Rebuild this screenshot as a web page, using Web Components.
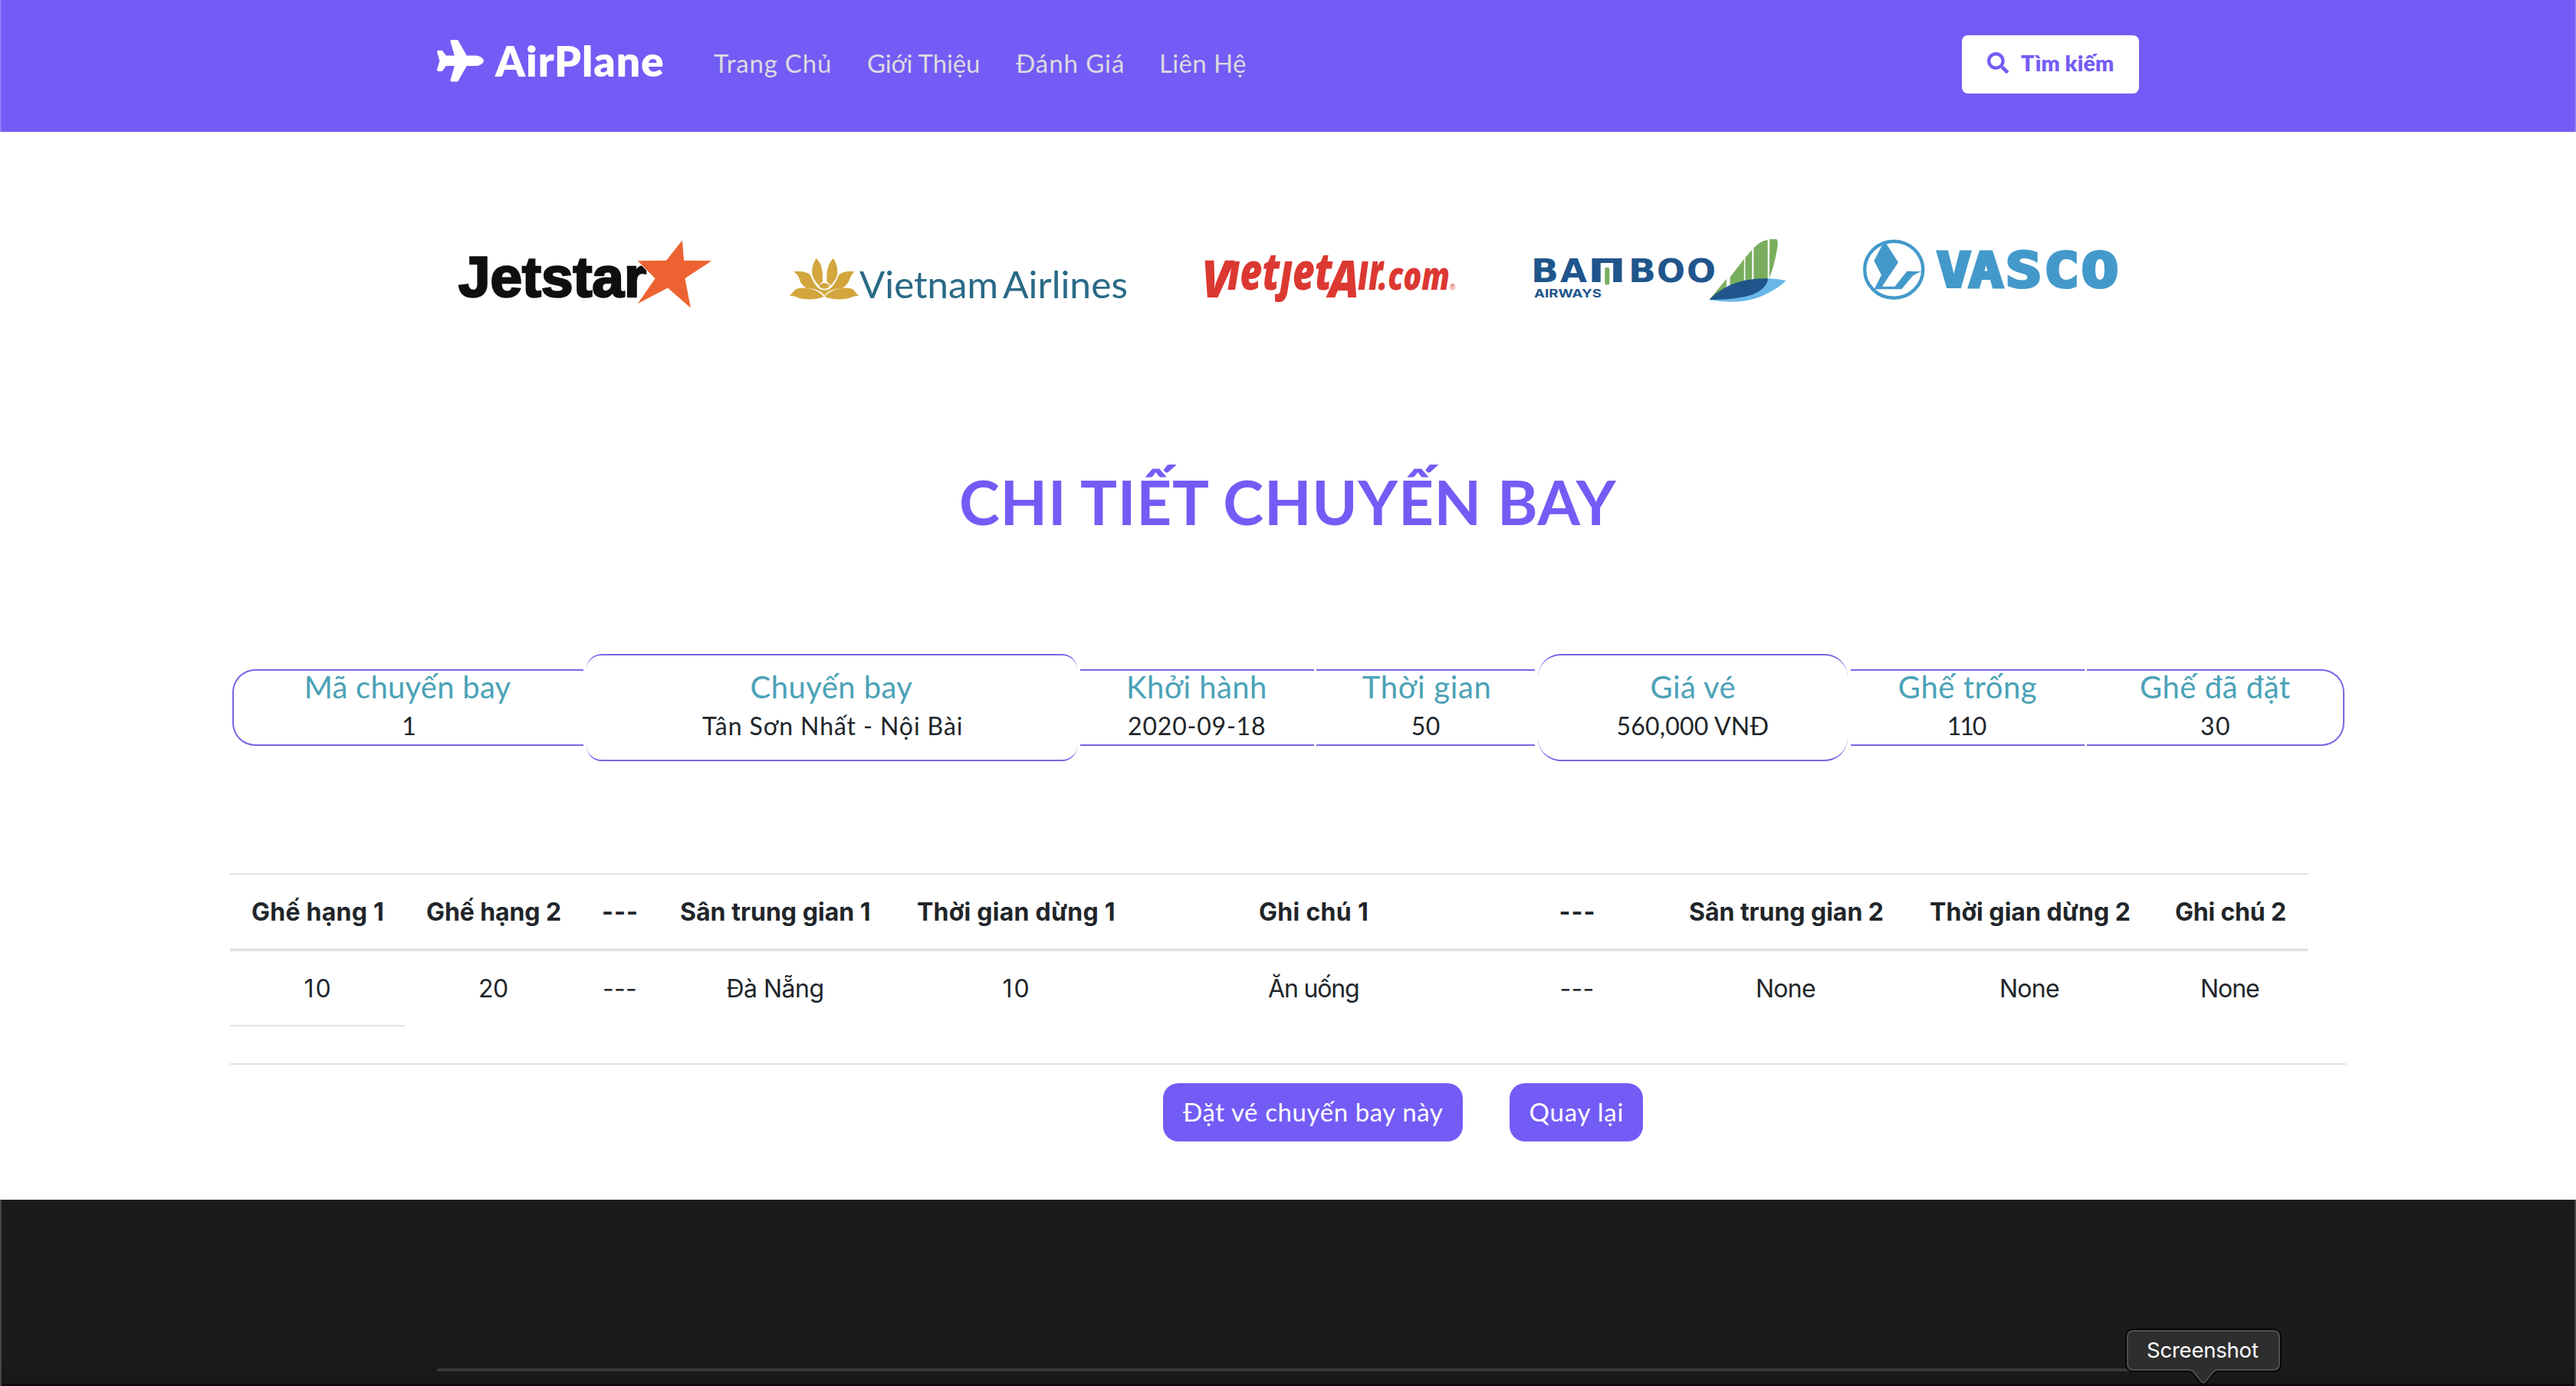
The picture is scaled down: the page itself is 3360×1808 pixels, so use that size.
<!DOCTYPE html>
<html lang="vi">
<head>
<meta charset="utf-8">
<title>AirPlane</title>
<style>
html,body{margin:0;padding:0;background:#fff}
body{width:3360px;height:1808px;overflow:hidden;font-family:Lato,"Open Sans",sans-serif;color:#212529}
</style>
</head>
<body>
<flight-page></flight-page>
<script>
/* Text run tracked out to an exact ink width. */
const pen = document.createElement('canvas').getContext('2d');
customElements.define('fit-text', class extends HTMLElement {
  connectedCallback() {
    if (this.shadowRoot) return;
    const root = this.attachShadow({mode: 'open'});
    root.innerHTML = '<style>:host{display:block;white-space:nowrap;flex:none}span{display:inline-block;vertical-align:top;letter-spacing:.01px}</style><span><slot></slot></span>';
    const w = +this.getAttribute('w');
    const cs = getComputedStyle(this);
    const text = this.textContent;
    pen.font = `${cs.fontWeight} ${cs.fontSize} ${cs.fontFamily}`;
    const m = pen.measureText(text);
    const span = root.querySelector('span');
    const ink = m.actualBoundingBoxLeft + m.actualBoundingBoxRight + span.getBoundingClientRect().width - m.width;
    const n = [...text].length;
    this.style.width = w + 'px';
    if (n > 1) span.style.letterSpacing = (w - ink) / (n - 1) + 'px';
    span.style.marginLeft = m.actualBoundingBoxLeft + 'px';
  }
});

customElements.define('site-header', class extends HTMLElement {
  connectedCallback() {
    this.attachShadow({mode: 'open'}).innerHTML = `
<style>
:host{display:flex;box-sizing:border-box;height:172px;padding:0 570px;background:#735cf5;align-items:flex-start;box-shadow:inset 2px 0 #8a78f6,inset -2px 0 #8a78f6}
.plane{display:block;width:61px;height:54.5px;margin-top:52px;flex:none}
.brand{margin-left:14px;font-size:55px;font-weight:800;color:#fff;line-height:158px}
nav{display:flex;margin-left:66px;gap:49px;font-size:33px;line-height:165px;color:#dcdadf}
nav :nth-child(3){margin-left:-1px}nav :nth-child(4){margin-left:1px}
button{all:unset;box-sizing:border-box;margin:46px 0 0 auto;width:231px;height:76px;border-radius:8px;background:#fff;color:#735cf5;display:flex;padding-left:33px;font-size:28.5px;font-weight:800;line-height:73px}
button svg{width:28px;height:28px;margin:22px 16px 0 0}
</style>
<svg class="plane" viewBox="0 0 576 512" fill="#fff" preserveAspectRatio="none"><path d="M480 192H365.71L260.61 8.06A16.014 16.014 0 0 0 246.71 0h-65.5c-10.63 0-18.3 10.17-15.38 20.39L214.86 192H112l-43.2-57.6c-3.02-4.03-7.77-6.4-12.8-6.4H16.01C5.6 128-2.04 137.78.49 147.88L32 256 .49 364.12C-2.04 374.22 5.6 384 16.01 384H56c5.04 0 9.78-2.37 12.8-6.4L112 320h102.86l-49.03 171.6c-2.92 10.22 4.75 20.4 15.38 20.4h65.5c5.74 0 11.04-3.08 13.89-8.06L365.71 320H480c35.35 0 96-28.65 96-64s-60.65-64-96-64z"/></svg>
<fit-text class="brand" w="220">AirPlane</fit-text>
<nav><fit-text w="152">Trang Chủ</fit-text><fit-text w="145">Giới Thiệu</fit-text><fit-text w="140">Đánh Giá</fit-text><fit-text w="110">Liên Hệ</fit-text></nav>
<button><svg viewBox="0 0 512 512" fill="currentColor"><path d="M505 442.7L405.3 343c-4.5-4.5-10.6-7-17-7H372c27.6-35.3 44-79.7 44-128C416 93.1 322.9 0 208 0S0 93.1 0 208s93.1 208 208 208c48.3 0 92.7-16.4 128-44v16.3c0 6.4 2.5 12.5 7 17l99.7 99.7c9.4 9.4 24.6 9.4 33.9 0l28.3-28.3c9.4-9.4 9.4-24.6.1-34zM208 336c-70.7 0-128-57.2-128-128 0-70.7 57.2-128 128-128 70.7 0 128 57.2 128 128 0 70.7-57.2 128-128 128z"/></svg><fit-text w="120">Tìm kiếm</fit-text></button>`;
  }
});

const T = (x, y, w, size, txt, extra = '') => `<text x="${x}" y="${y}" textLength="${w}" lengthAdjust="spacingAndGlyphs" font-size="${size}" ${extra}>${txt}</text>`;
const LOGOS = {
  jetstar: [600, 330, `
<g font-family="Liberation Sans" font-weight="700" fill="#100f0d" stroke="#100f0d" stroke-width="2.6">${T(598, 387, 245, 74, 'Jetstar')}</g>
<path fill="#ec6331" stroke="#fff" stroke-width="1" d="M890.4 312.3L892.5 339.3L929.7 339.8L894 363.3L901.5 402.7L871 376L830.5 397.3L854 363.3L831 339.8L869 339.3Z"/>`],
  vietnam: [1030, 440, `
<g transform="translate(580 290) scale(.5867 .3333)" fill="#d2a63c">
<path d="M826 141Q843 168 840 234Q832 239 834 250Q819 225 817 203Q815 170 826 141Z"/>
<path d="M864 141Q847 168 850 234Q858 239 856 250Q871 225 873 203Q875 170 864 141Z"/>
<path d="M775 193Q803 188 813 206Q821 246 836 265Q841 276 843 283Q829 258 805 259Q791 243 788 220Q785 203 775 193Z"/>
<path d="M911 193Q886 188 876 206Q868 246 853 265Q848 276 846 283Q860 258 884 259Q897 243 901 220Q904 203 911 193Z"/>
<path d="M767 287L781 261Q797 251 816 262Q832 270 843 290Q829 303 804 301Q789 300 781 291Q774 288 767 287Z"/>
<path d="M920 287L907 261Q891 251 872 262Q856 270 845 290Q859 303 884 301Q899 300 907 291Q914 288 920 287Z"/>
<ellipse cx="844" cy="249" rx="11" ry="11"/><path d="M835 260Q844 271 853 260Q851 274 845 287Q838 274 835 260Z"/></g>
<g font-family="Lato" fill="#2a6a87">${T(1121, 388.7, 181, 49, 'Vietnam')}${T(1308, 388.7, 163, 49, 'Airlines')}</g>`],
  vietjet: [1570, 330, `
<text font-family="Open Sans" font-weight="800" font-style="italic" fill="#dc3832" y="378" font-size="67"><tspan x="1567" y="388" textLength="39" lengthAdjust="spacingAndGlyphs">V</tspan><tspan x="1601" y="378" textLength="137" lengthAdjust="spacingAndGlyphs">ıetȷet</tspan><tspan x="1733" y="388" textLength="40" lengthAdjust="spacingAndGlyphs">A</tspan><tspan x="1771" y="378" textLength="33" lengthAdjust="spacingAndGlyphs">ır</tspan><tspan x="1798" y="378" font-size="52" textLength="93" lengthAdjust="spacingAndGlyphs">.com</tspan></text>
<text x="1891" y="378" font-family="Liberation Sans" font-size="10" fill="#dc3832">®</text>`],
  bamboo: [2000, 330, `
<g font-family="DejaVu Sans" font-weight="700" fill="#20558c">
<text y="368" font-size="42.5"><tspan x="1997" textLength="36" lengthAdjust="spacingAndGlyphs">B</tspan><tspan x="2035" textLength="35" lengthAdjust="spacingAndGlyphs">A</tspan><tspan x="2071" textLength="50" lengthAdjust="spacingAndGlyphs">Π</tspan><tspan x="2124" textLength="36" lengthAdjust="spacingAndGlyphs">B</tspan><tspan x="2161" textLength="37" lengthAdjust="spacingAndGlyphs">O</tspan><tspan x="2200" textLength="38" lengthAdjust="spacingAndGlyphs">O</tspan></text>
${T(2001, 387.5, 88, 15, 'AIRWAYS', 'font-family="Inter"')}</g>
<rect x="2093.3" y="349" width="6" height="22.6" rx="2" fill="#78ae5e"/>
<g transform="translate(1540 290) scale(.523 .3333)"><g fill="#78ae5e">
<path d="M1319 302L1361 222V252ZM1370 215L1405 144V234L1370 248ZM1408 138L1425 108V225L1408 232ZM1429 101Q1446 72 1464 69V222H1429ZM1469 66H1484Q1490 66 1489 90Q1483 150 1475 188L1468 219Z"/></g>
<path fill="#68b7e8" d="M1320 304Q1400 325 1455 285Q1493 256 1510 228Q1485 219 1463 220L1420 270Z"/>
<path fill="#20558c" d="M1318 303Q1372 216 1465 220Q1462 260 1426 283Q1386 304 1318 303Z"/></g>`],
  vasco: [2430, 330, `
<g fill="#4499cb"><ellipse cx="2470.2" cy="351.7" rx="38" ry="37" fill="none" stroke="#4499cb" stroke-width="4.4"/>
<path transform="translate(2400 290) scale(.3333)" d="M168 84L180 82L228 157L165 251H215L262 191L320 193Q293 200 277 218L241 262H134L162 206L133 150Z"/>
<text y="374" font-size="63" font-family="DejaVu Sans Mono" font-weight="700" stroke="#4499cb" stroke-width="4"><tspan x="2526" textLength="45" lengthAdjust="spacingAndGlyphs">V</tspan><tspan x="2568" textLength="45" lengthAdjust="spacingAndGlyphs">A</tspan><tspan x="2616" textLength="47" lengthAdjust="spacingAndGlyphs">S</tspan><tspan x="2666" textLength="46" lengthAdjust="spacingAndGlyphs">C</tspan><tspan x="2715" textLength="48" lengthAdjust="spacingAndGlyphs">O</tspan></text></g>`]
};
customElements.define('airline-logo', class extends HTMLElement {
  connectedCallback() {
    const [x, w, art] = LOGOS[this.getAttribute('name')];
    this.attachShadow({mode: 'open'}).innerHTML = `<style>:host{display:block;flex:none}svg{display:block;overflow:visible}</style>
<svg width="${w}" height="140" viewBox="${x} 290 ${w} 140">${art}</svg>`;
  }
});

customElements.define('info-cell', class extends HTMLElement {
  connectedCallback() {
    const g = k => this.getAttribute(k);
    const tall = this.hasAttribute('tall');
    this.attachShadow({mode: 'open'}).innerHTML = `<style>
:host{display:flex;flex-direction:column;align-items:center;box-sizing:border-box;flex:none;width:${g('width')}px;height:${tall ? 140 : 100}px;border:0 solid #7468e6;border-width:2px 0;border-radius:${g('radius') || 0};padding-top:${tall ? 20 : 0}px}
:host([first]){border-left-width:2px}:host([last]){border-right-width:2px}
.l{margin-top:-1px;font-size:40px;line-height:44px;color:#4ba2b7}.v{font-size:32px;line-height:57px}
</style><fit-text class="l" w="${g('lw')}">${g('label')}</fit-text><fit-text class="v" w="${g('vw')}">${g('value')}</fit-text>`;
  }
});

const COLS = [[228,'Ghế hạng 1',170,'10',33],[232,'Ghế hạng 2',174,'20',36],[97,'---',43,'---',41],[308,'Sân trung gian 1',246,'Đà Nẵng',125],[320,'Thời gian dừng 1',256,'10',33],[456,'Ghi chú 1',140,'Ăn uống',118],[232,'---',43,'---',41],[314,'Sân trung gian 2',252,'None',76],[322,'Thời gian dừng 2',260,'None',76],[201,'Ghi chú 2',143,'None',75]];
customElements.define('detail-table', class extends HTMLElement {
  connectedCallback() {
    const row = (i, c) => `<div class="row ${c}">${COLS.map(k => `<div class="cell" style="width:${k[0]}px"><fit-text w="${k[i + 1]}">${k[i]}</fit-text></div>`).join('')}</div>`;
    this.attachShadow({mode: 'open'}).innerHTML = `<style>
:host{display:block;width:2760px;border-bottom:2px solid #dee2e6;font:400 32px/98px Inter,sans-serif}
.row{display:flex;width:2710px;height:96px}.cell{display:flex;justify-content:center;flex:none}
.head{font-weight:700;border-top:2px solid #dee2e6;border-bottom:4px solid #dee2e6}
.tail{width:228px;height:48px;border-top:2px solid #dee2e6}
</style>${row(1, 'head')}${row(3, '')}<div class="tail"></div>`;
  }
});

customElements.define('action-button', class extends HTMLElement {
  connectedCallback() {
    this.attachShadow({mode: 'open'}).innerHTML = `<style>
:host{display:flex;justify-content:center;box-sizing:border-box;height:76px;border-radius:20px;background:#735cf5;color:#fff;font-size:33px;line-height:75px}
</style><slot></slot>`;
  }
});

customElements.define('dock-tooltip', class extends HTMLElement {
  connectedCallback() {
    this.attachShadow({mode: 'open'}).innerHTML = `<style>
:host{position:absolute;left:2772px;top:1733px;width:204px;height:75px;display:block;font:400 27.5px/50px Inter,sans-serif;color:#fff}
svg{position:absolute;left:0;top:0}fit-text{position:relative;margin:3px 0 0 29px}
</style><svg width="204" height="75"><path d="M11 3H193Q201 3 201 11V46Q201 54 193 54H121Q116 54 113 59L105 69Q102 73 99 69L91 59Q88 54 83 54H11Q3 54 3 46V11Q3 3 11 3Z" fill="none" stroke="#000" stroke-width="5"/><path d="M11 3H193Q201 3 201 11V46Q201 54 193 54H121Q116 54 113 59L105 69Q102 73 99 69L91 59Q88 54 83 54H11Q3 54 3 46V11Q3 3 11 3Z" fill="#2e2e2e" stroke="#4f4f4f" stroke-width="2"/></svg><fit-text w="145">Screenshot</fit-text>`;
  }
});

customElements.define('site-footer', class extends HTMLElement {
  connectedCallback() {
    this.attachShadow({mode: 'open'}).innerHTML = `<style>
:host{display:block;box-sizing:border-box;height:243px;padding:220px 570px 0;background:linear-gradient(#1b1b1b 205px,#181818 240px,#110a0d 240px);box-shadow:inset 2px 0 #474747,inset -2px 0 #474747}
div{height:4px;background:#373737}
</style><div></div><slot></slot>`;
  }
});

customElements.define('flight-page', class extends HTMLElement {
  connectedCallback() {
    this.attachShadow({mode: 'open'}).innerHTML = `<style>
:host{display:flex;flex-direction:column}
.logos{display:flex;gap:100px;padding:118px 0 0 600px}
h1{display:flex;margin:174px 0 0;padding-left:1254px;font-size:80px;line-height:100px;font-weight:700;color:#735cf5}
.info{display:flex;align-items:center;height:140px;margin-top:149px;padding-left:303px}
.info>*{margin-right:3.6px}
detail-table{margin:146px 0 0 300px}
.actions{display:flex;gap:61px;margin:24px 0 76px;padding-left:1517px}
</style>
<site-header></site-header>
<div class="logos"><airline-logo name="jetstar"></airline-logo><airline-logo name="vietnam"></airline-logo><airline-logo name="vietjet"></airline-logo><airline-logo name="bamboo"></airline-logo><airline-logo name="vasco"></airline-logo></div>
<h1><fit-text w="855">CHI TIẾT CHUYẾN BAY</fit-text></h1>
<div class="info">
<info-cell first width="458.4" radius="30px 0 0 30px" label="Mã chuyến bay" lw="267" value="1" vw="14"></info-cell>
<info-cell tall width="640" radius="20px" label="Chuyến bay" lw="211" value="Tân Sơn Nhất - Nội Bài" vw="338"></info-cell>
<info-cell width="305" label="Khởi hành" lw="178" value="2020-09-18" vw="178"></info-cell>
<info-cell width="285" label="Thời gian" lw="166" value="50" vw="36"></info-cell>
<info-cell tall width="404.5" radius="30px" label="Giá vé" lw="109" value="560,000 VNĐ" vw="197"></info-cell>
<info-cell width="305" label="Ghế trống" lw="179" value="110" vw="49"></info-cell>
<info-cell last width="336" radius="0 30px 30px 0" label="Ghế đã đặt" lw="195" value="30" vw="37"></info-cell>
</div>
<detail-table></detail-table>
<div class="actions"><action-button style="width:391px"><fit-text w="339">Đặt vé chuyến bay này</fit-text></action-button><action-button style="width:174px"><fit-text w="121">Quay lại</fit-text></action-button></div>
<site-footer><dock-tooltip></dock-tooltip></site-footer>`;
  }
});
</script>
</body>
</html>
